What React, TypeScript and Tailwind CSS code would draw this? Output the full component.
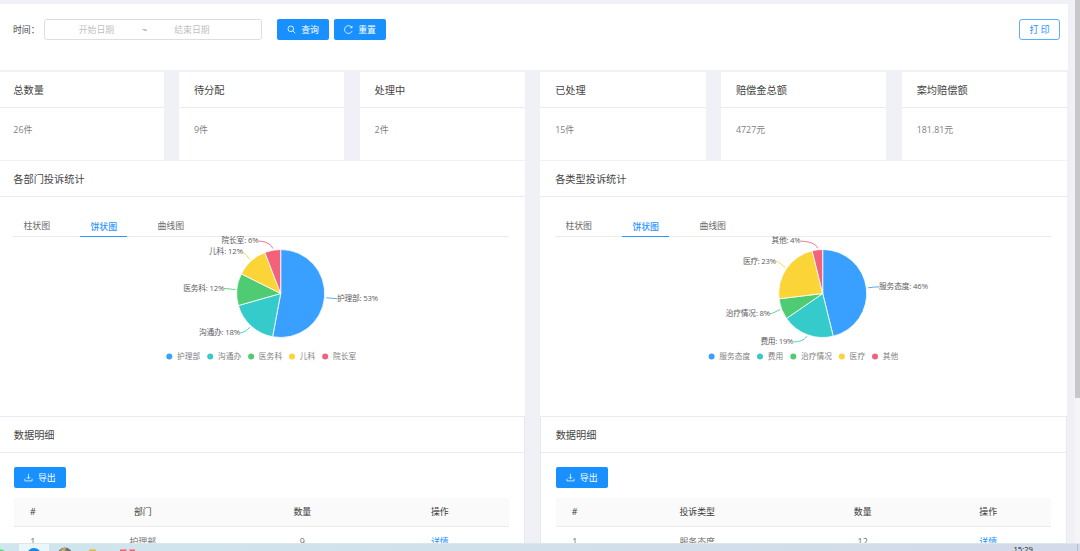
import React from "react";

type Slice = {
  name: string;
  value: number;
  color: string;
  label: string;
  labelX: number;
  labelY: number;
  labelW: number;
  line: string;
  legendX: number;
  legendW: number;
};

const departments: Slice[] = [
  { name: "护理部", value: 9, color: "#3aa0ff", label: "护理部: 53%", labelX: 337, labelY: 301, labelW: 41, line: "M326.3 297.8 C330 298 333 298.6 337 298.6", legendX: 169.3, legendW: 23.3 },
  { name: "沟通办", value: 3, color: "#36cbcb", label: "沟通办: 18%", labelX: 199, labelY: 335.3, labelW: 41, line: "M250 327.3 C247 330 244 332.8 240 333", legendX: 210.2, legendW: 23.3 },
  { name: "医务科", value: 2, color: "#4ecb73", label: "医务科: 12%", labelX: 183.3, labelY: 291, labelW: 41, line: "M235.5 289.5 C231 289.3 228 288.6 224 288.6", legendX: 251.1, legendW: 23.3 },
  { name: "儿科", value: 2, color: "#fbd437", label: "儿科: 12%", labelX: 209, labelY: 254, labelW: 34, line: "M250 259.7 C248 257.5 246 253.5 242.5 252", legendX: 292, legendW: 15.6 },
  { name: "院长室", value: 1, color: "#f2637b", label: "院长室: 6%", labelX: 221.5, labelY: 243.3, labelW: 37, line: "M272.7 248.5 C271.5 244 264 240.8 258.5 241.2", legendX: 325.2, legendW: 23.3 },
];

const categories: Slice[] = [
  { name: "服务态度", value: 12, color: "#3aa0ff", label: "服务态度: 46%", labelX: 337, labelY: 289.3, labelW: 49, line: "M326.2 287.8 C330 287.5 333 286.8 337 286.8", legendX: 169.6, legendW: 31 },
  { name: "费用", value: 5, color: "#36cbcb", label: "费用: 19%", labelX: 218.4, labelY: 344.3, labelW: 33, line: "M264.7 336.3 C262.5 340.5 257 341.8 251.4 341.8", legendX: 218, legendW: 15.6 },
  { name: "治疗情况", value: 2, color: "#4ecb73", label: "治疗情况: 8%", labelX: 183.7, labelY: 316.3, labelW: 44.5, line: "M238 309.6 C234.5 311 231.5 313.4 227.8 313.8", legendX: 251.3, legendW: 31 },
  { name: "医疗", value: 6, color: "#fbd437", label: "医疗: 23%", labelX: 201, labelY: 263.6, labelW: 33, line: "M243.5 267.5 C240 265.5 238 261.8 234 261.2", legendX: 299.8, legendW: 15.6 },
  { name: "其他", value: 1, color: "#f2637b", label: "其他: 4%", labelX: 229.5, labelY: 243.3, labelW: 29, line: "M275.6 248.2 C274 243 265 241.2 258.8 241.2", legendX: 333, legendW: 15.6 },
];

const CX = 280.7;
const CY = 293.5;
const R = 44;

function PieChart({ data }: { data: Slice[] }) {
  const total = data.reduce((sum, d) => sum + d.value, 0);
  let start = 0;
  return (
    <svg className="block h-[178px] w-[511px] shrink-0 overflow-visible" viewBox="13 237 511 178">
      {data.map((d) => {
        const end = start + (d.value / total) * Math.PI * 2;
        const large = end - start > Math.PI ? 1 : 0;
        const path = `M${CX} ${CY} L${CX + R * Math.sin(start)} ${CY - R * Math.cos(start)} A${R} ${R} 0 ${large} 1 ${CX + R * Math.sin(end)} ${CY - R * Math.cos(end)} Z`;
        start = end;
        return <path key={d.name} d={path} fill={d.color} stroke="#fff" strokeWidth="0.8" />;
      })}
      {data.map((d) => (
        <g key={d.name}>
          <path d={d.line} fill="none" stroke={d.color} strokeWidth="0.9" />
          <text x={d.labelX} y={d.labelY} textLength={d.labelW} className="fill-[#5c5c5c] text-[7.7px]">
            {d.label}
          </text>
          <circle cx={d.legendX} cy="356.5" r="3" fill={d.color} />
          <text x={d.legendX + 7.7} y="358.7" textLength={d.legendW} className="fill-[#808080] text-[7.7px]">
            {d.name}
          </text>
        </g>
      ))}
    </svg>
  );
}

function StatCard({ title, value }: { title: string; value: string }) {
  return (
    <div className="h-[88px] flex-1 bg-white">
      <div className="flex h-9 items-center border-b border-[#ebebed] pl-[15px] pt-[3px] text-[10.2px] text-[#444]">{title}</div>
      <div className="flex h-[43px] items-center pl-[15px] text-[8.9px] text-[#808080]">{value}</div>
    </div>
  );
}

function ChartPanel({ title, data }: { title: string; data: Slice[] }) {
  return (
    <section className="h-[255px] overflow-hidden bg-white">
      <h2 className="flex h-9 items-center border-b border-[#ebebed] pl-[15px] pt-[2px] text-[10.2px] text-[#444]">{title}</h2>
      <div className="pl-[15px]">
        <div className="mr-4 flex h-10 items-end gap-5 border-b border-[#ebebed] text-[8.9px] text-[#6b6b6b]">
          <div className="h-[21px] w-[47px] pt-1 text-center leading-[14px]">柱状图</div>
          <div className="-mb-px h-[22px] w-[47px] border-b-[1.5px] border-[#2e96ff] pt-[5px] text-center font-medium leading-[14px] text-[#2e96ff]">饼状图</div>
          <div className="h-[21px] w-[47px] pt-1 text-center leading-[14px]">曲线图</div>
        </div>
        <PieChart data={data} />
      </div>
    </section>
  );
}

function DownloadIcon() {
  return (
    <svg className="size-[9px]" viewBox="0 0 9 9" fill="none" stroke="#fff" strokeWidth="0.75">
      <path d="M4.5 0.8V5.7M2.8 4.1 4.5 5.8 6.2 4.1M0.9 5.7V7.9H8.1V5.7" />
    </svg>
  );
}

function DetailPanel({ column, first, count, cols }: { column: string; first: string; count: string; cols: string }) {
  return (
    <section className="h-[128px] overflow-hidden border-x border-t border-[#e9eaed] bg-white">
      <h2 className="flex h-9 items-center border-b border-[#ebebed] pl-[14.5px] pt-[3px] text-[10.2px] text-[#444]">数据明细</h2>
      <div className="pl-[14.5px] pr-[15px] pt-[14px]">
        <button className="flex h-[21px] w-[52px] items-center justify-center gap-[5px] rounded-[2px] bg-[#1890ff] text-[8.9px] text-white">
          <DownloadIcon />
          导出
        </button>
        <div className={`mt-[10px] grid h-[29px] items-center border-b border-[#ebebed] bg-[#fafafa] text-center text-[8.9px] text-[#3c3c3c] ${cols}`}>
          <span>#</span>
          <span>{column}</span>
          <span>数量</span>
          <span>操作</span>
        </div>
        <div className={`grid h-[29px] items-center text-center text-[8.9px] text-[#707070] ${cols}`}>
          <span>1</span>
          <span>{first}</span>
          <span>{count}</span>
          <span className="text-[#1890ff]">详情</span>
        </div>
      </div>
    </section>
  );
}

function Filters() {
  return (
    <div className="mt-1 flex h-[66px] items-start bg-white pl-[14.7px] pr-[7.5px] pt-[15px] text-[8.9px]">
      <span className="w-[31px] leading-[21px] text-[#444]">时间：</span>
      <div className="flex h-[21px] w-[218px] items-center rounded-[3px] border border-[#dedede] text-[#bfbfbf]">
        <span className="w-[93px] pl-[10px] text-center">开始日期</span>
        <span className="w-[13px] text-center text-[#8a8a8a]">~</span>
        <span className="w-[82px] text-center">结束日期</span>
      </div>
      <button className="ml-[15px] flex h-[21px] w-[52px] items-center justify-center gap-[5px] rounded-[2px] bg-[#1890ff] text-white">
        <svg className="size-[9px]" viewBox="0 0 9 9" fill="none" stroke="#fff" strokeWidth="0.85">
          <circle cx="3.8" cy="3.8" r="2.8" />
          <path d="M5.8 5.8 8.4 8.4" />
        </svg>
        查询
      </button>
      <button className="ml-[5px] flex h-[21px] w-[52px] items-center justify-center gap-[5px] rounded-[2px] bg-[#1890ff] text-white">
        <svg className="size-[9px]" viewBox="0 0 9 9" fill="none" stroke="#fff" strokeWidth="0.8">
          <path d="M7.8 2.5A3.9 3.9 0 1 0 8.1 6M8 1V2.8H6.2" />
        </svg>
        重置
      </button>
      <button className="ml-auto h-[21px] w-[41px] rounded-[3px] border border-[#5caeff] text-[#1890ff]">打 印</button>
    </div>
  );
}

function Taskbar() {
  return (
    <footer className="flex h-2 w-full shrink-0 overflow-hidden border-t border-[#dce7ec] bg-linear-to-r from-[#cfe6ed] to-[#d3dae9]">
      <svg className="h-[7px] w-40 shrink-0" viewBox="0 0 160 7">
        <rect x="19" width="30" height="7" fill="#ebf6fa" />
        <circle cx="1" cy="10" r="4.5" fill="#51dc75" />
        <circle cx="34" cy="11" r="7" fill="#1689e6" />
        <circle cx="65" cy="11" r="7.5" fill="#77716b" />
        <path d="M60 7 Q63 3 66 4 L65 7Z" fill="#c4ad6b" />
        <rect x="89" y="5.5" width="7" height="2" rx="1" fill="#e0b741" />
        <path d="M120 5.5H127L126 7H120ZM129 5.5H135V7H130Z" fill="#ee6568" />
      </svg>
      <time className="ml-auto mr-[44px] text-[7.7px] leading-[11px] text-[#222]">15:29</time>
      <span className="w-[3px] border-l border-[#b5bdca]" />
    </footer>
  );
}

export default function App() {
  return (
    <div className="flex h-[551px] w-[1080px] flex-col overflow-hidden bg-[#f0f1f6] font-['Open_Sans','Noto_Sans_CJK_SC',sans-serif]">
      <div className="flex h-[543px] shrink-0">
        <main className="-ml-[1.7px] w-[1069.2px] shrink-0">
          <Filters />
          <div className="grid grid-cols-[526.7px_527px] gap-x-[15.2px]">
            <div>
              <div className="mb-px mt-[2px] flex gap-[15.2px]">
                <StatCard title="总数量" value="26件" />
                <StatCard title="待分配" value="9件" />
                <StatCard title="处理中" value="2件" />
              </div>
              <ChartPanel title="各部门投诉统计" data={departments} />
              <DetailPanel column="部门" first="护理部" count="9" cols="grid-cols-[38px_182px_137px_138px]" />
            </div>
            <div>
              <div className="mb-px mt-[2px] flex gap-[15.2px]">
                <StatCard title="已处理" value="15件" />
                <StatCard title="赔偿金总额" value="4727元" />
                <StatCard title="案均赔偿额" value="181.81元" />
              </div>
              <ChartPanel title="各类型投诉统计" data={categories} />
              <DetailPanel column="投诉类型" first="服务态度" count="12" cols="grid-cols-[38px_207px_124px_127px]" />
            </div>
          </div>
        </main>
        <aside className="ml-auto w-[5px] bg-[#f5f5f6]">
          <div className="h-[398px] bg-[#c8c8c8]" />
        </aside>
      </div>
      <Taskbar />
    </div>
  );
}
